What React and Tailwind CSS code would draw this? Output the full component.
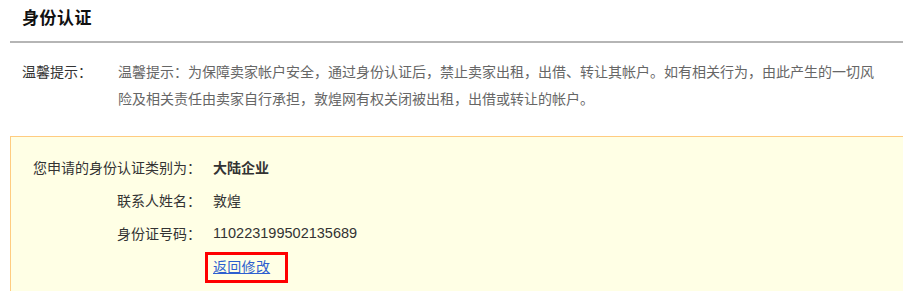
import React from "react";

const cjk = "font-['Noto_Sans_CJK_SC','Noto_Sans',sans-serif]";

export default function App() {
  return (
    <div className={`${cjk} bg-white w-[903px] h-[291px] overflow-hidden pl-[10px]`}>
      {/* Header */}
      <div className="h-[43px] border-b-2 border-[#b5b5b5] flex items-center pl-[12px] pb-[8px]">
        <h1 className="text-[17px] font-bold text-[#111] leading-[20px] tracking-[0.5px]">身份认证</h1>
      </div>

      {/* Tip */}
      <div className="flex pt-[15px] pl-[12px] text-[14px] leading-[27px]">
        <div className="w-[96px] shrink-0 text-[#333]">温馨提示：</div>
        <p className="w-[762px] text-[#666]">
          温馨提示：为保障卖家帐户安全，通过身份认证后，禁止卖家出租，出借、转让其帐户。如有相关行为，由此产生的一切风险及相关责任由卖家自行承担，敦煌网有权关闭被出租，出借或转让的帐户。
        </p>
      </div>

      {/* Info box */}
      <div className="mt-[24px] border-t border-l border-[#ffcc80] bg-[#ffffe5] pt-[14px] pb-[20px] text-[14px] text-[#333]">
        <div className="flex items-center h-[33px]">
          <div className="w-[190px] text-right">您申请的身份认证类别为：</div>
          <div className="ml-[12px] font-bold text-[#333]">大陆企业</div>
        </div>
        <div className="flex items-center h-[33px]">
          <div className="w-[190px] text-right">联系人姓名：</div>
          <div className="ml-[12px]">敦煌</div>
        </div>
        <div className="flex items-center h-[33px]">
          <div className="w-[190px] text-right">身份证号码：</div>
          <div className="ml-[12px] font-['Liberation_Sans',sans-serif] text-[14.5px]">110223199502135689</div>
        </div>
        <div className="flex mt-[2px] ml-[194px]">
          <div className="border-[3px] border-[#ff0000] h-[31px] pl-[5px] pr-[15px] flex items-start">
            <a href="#" className="text-[#2e5fcf] underline leading-[22px] text-[14px] tracking-[0.3px]">返回修改</a>
          </div>
        </div>
      </div>
    </div>
  );
}
